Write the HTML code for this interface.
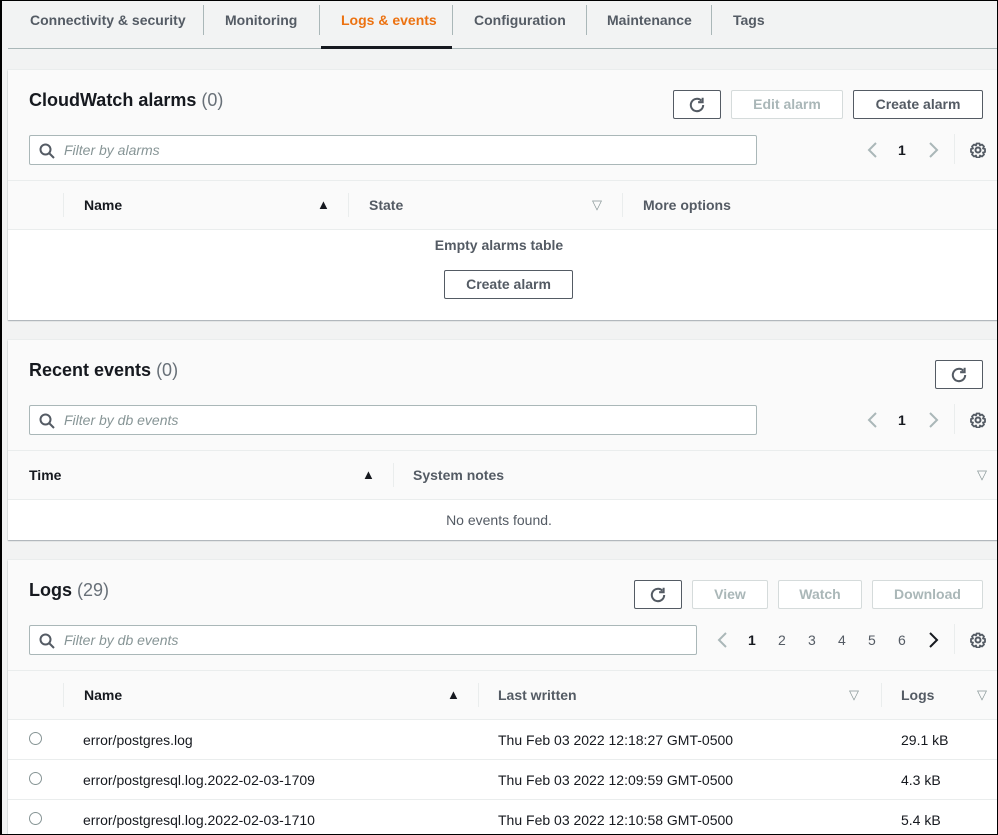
<!DOCTYPE html>
<html><head><meta charset="utf-8"><style>
*{box-sizing:border-box;margin:0;padding:0}
html,body{width:998px;height:835px;overflow:hidden}
body{background:#f2f3f3;font-family:"Liberation Sans",sans-serif;font-size:14px;color:#16191f;position:relative}
.frame{position:absolute;left:0;top:0;width:998px;height:835px;border:1px solid #000;border-left:2px solid #000;pointer-events:none;z-index:10}
.a{position:absolute}
.tab{position:absolute;top:12px;font-weight:bold;color:#545b64;font-size:14px}
.sep{position:absolute;top:5px;width:1px;height:30px;background:#aab7b8}
.panel{position:absolute;left:8px;right:0;background:#fff;box-shadow:0 1px 1px rgba(0,22,40,.3),0 0 0 1px #eaeded}
.hd{position:absolute;left:0;right:0;top:0;background:#fafafa}
.title{position:absolute;left:21px;font-size:18px;font-weight:bold}
.title span{font-weight:normal;color:#687078}
.btn{position:absolute;height:29px;border:1px solid #545b64;border-radius:2px;background:#fff;font-weight:bold;color:#545b64;text-align:center;line-height:27px}
.dis{border-color:#d5dbdb;color:#aab7b8}
.inp{position:absolute;left:21px;height:30px;border:1px solid #aab7b8;border-radius:2px;background:#fff;font-style:italic;color:#879596;line-height:28px;padding-left:34px}
.inp svg{position:absolute;left:9px;top:7px}
.th{position:absolute;left:0;right:0;height:50px;background:#fafafa;border-top:1px solid #eaeded;border-bottom:1px solid #eaeded}
.th b{position:absolute;top:16px}
.cs{position:absolute;top:12px;width:1px;height:24px;background:#eaeded}
.pg{position:absolute;color:#545b64}
.row{position:absolute;left:0;right:0;height:40px;border-bottom:1px solid #eaeded}
.row span{position:absolute;top:12px}
.rad{position:absolute;left:21px;top:12px;width:13px;height:13px;border:1px solid #879596;border-radius:50%}
.tri{position:absolute;font-size:13px}
</style></head><body>
<div class="frame"></div>
<div class="tab" style="left:30px">Connectivity &amp; security</div>
<div class="sep" style="left:203px"></div>
<div class="tab" style="left:225px">Monitoring</div>
<div class="sep" style="left:319px"></div>
<div class="tab" style="left:341px;color:#ec7211">Logs &amp; events</div>
<div class="sep" style="left:452px"></div>
<div class="tab" style="left:474px">Configuration</div>
<div class="sep" style="left:586px"></div>
<div class="tab" style="left:607px">Maintenance</div>
<div class="sep" style="left:711px"></div>
<div class="tab" style="left:733px">Tags</div>
<div class="a" style="left:8px;right:0;top:48px;height:1px;background:#aab7b8"></div>
<div class="a" style="left:321px;width:131px;top:46px;height:3px;background:#16191f"></div>

<svg width="0" height="0" style="position:absolute"><defs>
<symbol id="rf" viewBox="0 0 16 16"><path d="M13.5 8a5.5 5.5 0 1 1-1.6-3.9" fill="none" stroke="#545b64" stroke-width="1.8"/><path d="M13 1.5v4h-4" fill="none" stroke="#545b64" stroke-width="1.8"/></symbol>
<symbol id="sr" viewBox="0 0 16 16"><circle cx="6.5" cy="6.5" r="5" fill="none" stroke="#545b64" stroke-width="2"/><path d="M10 10l5 5" stroke="#545b64" stroke-width="2"/></symbol>
<symbol id="gr" viewBox="0 0 16 16"><circle cx="8" cy="8" r="2.5" fill="none" stroke="#545b64" stroke-width="2"/><path d="M6.5 1.5h3l.5 2 2-1 2 2-1 2 2 .5v3l-2 .5 1 2-2 2-2-1-.5 2h-3l-.5-2-2 1-2-2 1-2-2-.5v-3l2-.5-1-2 2-2 2 1z" fill="none" stroke="#545b64" stroke-width="1.8" stroke-linejoin="round"/></symbol>
<symbol id="cl" viewBox="0 0 16 16"><path d="M11 1L4 8l7 7" fill="none" stroke-width="2"/></symbol>
<symbol id="cr" viewBox="0 0 16 16"><path d="M5 1l7 7-7 7" fill="none" stroke-width="2"/></symbol>
</defs></svg>

<!-- Panel 1 -->
<div class="panel" style="top:70px;height:250px">
<div class="hd" style="height:110px"></div>
<div class="title" style="top:20px">CloudWatch alarms <span>(0)</span></div>
<div class="btn" style="left:665px;top:20px;width:48px"><svg width="18" height="18" style="margin-top:5px"><use href="#rf"/></svg></div>
<div class="btn dis" style="left:723px;top:20px;width:112px">Edit alarm</div>
<div class="btn" style="left:845px;top:20px;width:130px">Create alarm</div>
<div class="inp" style="top:65px;width:728px"><svg width="16" height="16"><use href="#sr"/></svg>Filter by alarms</div>
<svg class="a" style="left:857px;top:72px" width="16" height="16" stroke="#aab7b8"><use href="#cl"/></svg>
<div class="pg" style="left:890px;top:72px;font-weight:bold;color:#16191f">1</div>
<svg class="a" style="left:917px;top:72px" width="16" height="16" stroke="#aab7b8"><use href="#cr"/></svg>
<div class="a" style="left:946px;top:64px;width:1px;height:30px;background:#eaeded"></div>
<svg class="a" style="left:962px;top:72px" width="16" height="16"><use href="#gr"/></svg>
<div class="th" style="top:110px">
<div class="cs" style="left:55px"></div><b style="left:76px">Name</b><span class="tri" style="left:309px;top:16px">&#9650;</span>
<div class="cs" style="left:340px"></div><b style="left:361px;color:#545b64">State</b><span class="tri" style="left:584px;top:16px;color:#879596">&#9661;</span>
<div class="cs" style="left:614px"></div><b style="left:635px;color:#545b64">More options</b>
</div>
<div class="a" style="left:0;right:0;top:167px;text-align:center;font-weight:bold;color:#545b64;padding-right:8px">Empty alarms table</div>
<div class="btn" style="left:436px;top:200px;width:129px">Create alarm</div>
</div>

<!-- Panel 2 -->
<div class="panel" style="top:340px;height:200px">
<div class="hd" style="height:110px"></div>
<div class="title" style="top:20px">Recent events <span>(0)</span></div>
<div class="btn" style="left:927px;top:20px;width:48px"><svg width="18" height="18" style="margin-top:5px"><use href="#rf"/></svg></div>
<div class="inp" style="top:65px;width:728px"><svg width="16" height="16"><use href="#sr"/></svg>Filter by db events</div>
<svg class="a" style="left:857px;top:72px" width="16" height="16" stroke="#aab7b8"><use href="#cl"/></svg>
<div class="pg" style="left:890px;top:72px;font-weight:bold;color:#16191f">1</div>
<svg class="a" style="left:917px;top:72px" width="16" height="16" stroke="#aab7b8"><use href="#cr"/></svg>
<div class="a" style="left:946px;top:64px;width:1px;height:30px;background:#eaeded"></div>
<svg class="a" style="left:962px;top:72px" width="16" height="16"><use href="#gr"/></svg>
<div class="th" style="top:110px">
<b style="left:21px">Time</b><span class="tri" style="left:354px;top:16px">&#9650;</span>
<div class="cs" style="left:385px"></div><b style="left:405px;color:#545b64">System notes</b><span class="tri" style="left:969px;top:16px;color:#879596">&#9661;</span>
</div>
<div class="a" style="left:0;right:0;top:172px;text-align:center;color:#545b64;padding-right:8px">No events found.</div>
</div>

<!-- Panel 3 -->
<div class="panel" style="top:560px;height:280px">
<div class="hd" style="height:110px"></div>
<div class="title" style="top:20px">Logs <span>(29)</span></div>
<div class="btn" style="left:626px;top:20px;width:48px"><svg width="18" height="18" style="margin-top:5px"><use href="#rf"/></svg></div>
<div class="btn dis" style="left:684px;top:20px;width:76px">View</div>
<div class="btn dis" style="left:770px;top:20px;width:84px">Watch</div>
<div class="btn dis" style="left:864px;top:20px;width:111px">Download</div>
<div class="inp" style="top:65px;width:668px"><svg width="16" height="16"><use href="#sr"/></svg>Filter by db events</div>
<svg class="a" style="left:707px;top:72px" width="16" height="16" stroke="#aab7b8"><use href="#cl"/></svg>
<div class="pg" style="left:740px;top:72px;font-weight:bold;color:#16191f">1</div>
<div class="pg" style="left:770px;top:72px">2</div>
<div class="pg" style="left:800px;top:72px">3</div>
<div class="pg" style="left:830px;top:72px">4</div>
<div class="pg" style="left:860px;top:72px">5</div>
<div class="pg" style="left:890px;top:72px">6</div>
<svg class="a" style="left:917px;top:72px" width="16" height="16" stroke="#16191f"><use href="#cr"/></svg>
<div class="a" style="left:946px;top:64px;width:1px;height:30px;background:#eaeded"></div>
<svg class="a" style="left:962px;top:72px" width="16" height="16"><use href="#gr"/></svg>
<div class="th" style="top:110px">
<div class="cs" style="left:55px"></div><b style="left:76px">Name</b><span class="tri" style="left:439px;top:16px">&#9650;</span>
<div class="cs" style="left:470px"></div><b style="left:490px;color:#545b64">Last written</b><span class="tri" style="left:841px;top:16px;color:#879596">&#9661;</span>
<div class="cs" style="left:873px"></div><b style="left:893px;color:#545b64">Logs</b><span class="tri" style="left:969px;top:16px;color:#879596">&#9661;</span>
</div>
<div class="row" style="top:160px"><div class="rad"></div><span style="left:75px">error/postgres.log</span><span style="left:490px">Thu Feb 03 2022 12:18:27 GMT-0500</span><span style="left:893px">29.1 kB</span></div>
<div class="row" style="top:200px"><div class="rad"></div><span style="left:75px">error/postgresql.log.2022-02-03-1709</span><span style="left:490px">Thu Feb 03 2022 12:09:59 GMT-0500</span><span style="left:893px">4.3 kB</span></div>
<div class="row" style="top:240px"><div class="rad"></div><span style="left:75px">error/postgresql.log.2022-02-03-1710</span><span style="left:490px">Thu Feb 03 2022 12:10:58 GMT-0500</span><span style="left:893px">5.4 kB</span></div>
</div>
</body></html>
